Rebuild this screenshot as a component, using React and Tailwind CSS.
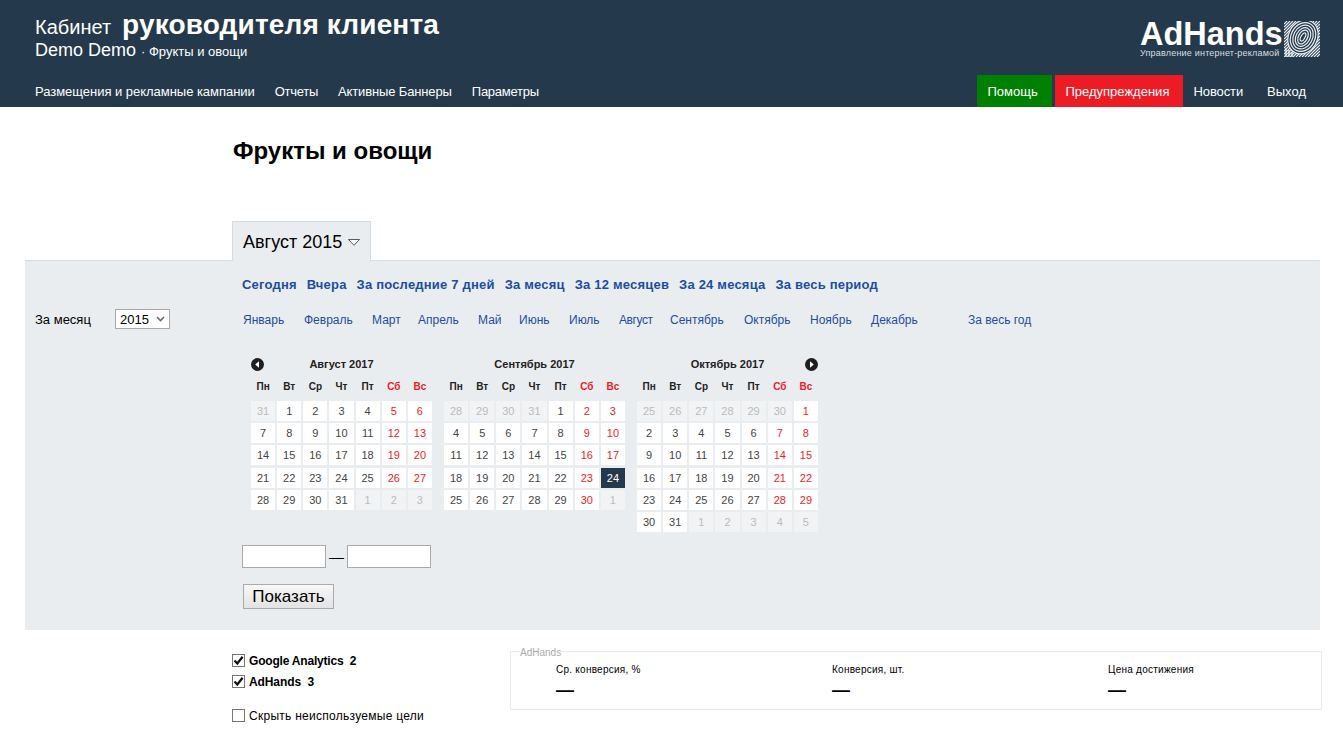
import React from "react";

const WEEK = ["Пн", "Вт", "Ср", "Чт", "Пт", "Сб", "Вс"];
const MONTH_NAMES = [
  { name: "Январь", cls: "w-[61px]" },
  { name: "Февраль", cls: "w-[68px]" },
  { name: "Март", cls: "w-[46px]" },
  { name: "Апрель", cls: "w-[60px]" },
  { name: "Май", cls: "w-[41px]" },
  { name: "Июнь", cls: "w-[50px]" },
  { name: "Июль", cls: "w-[50px]" },
  { name: "Август", cls: "w-[51px] tracking-[-0.4px]" },
  { name: "Сентябрь", cls: "w-[74px]" },
  { name: "Октябрь", cls: "w-[66px]" },
  { name: "Ноябрь", cls: "w-[61px]" },
  { name: "Декабрь", cls: "w-[97px]" },
  { name: "За весь год", cls: "" },
];
const QUICK = ["Сегодня", "Вчера", "За последние 7 дней", "За месяц", "За 12 месяцев", "За 24 месяца", "За весь период"];

const range = (from, to) => {
  const out = [];
  for (let i = from; i <= to; i++) out.push(i);
  return out;
};

const MONTHS = [
  { title: "Август 2017", before: [31], days: 31, after: [1, 2, 3], prev: true },
  { title: "Сентябрь 2017", before: [28, 29, 30, 31], days: 30, after: [1], selected: 24 },
  { title: "Октябрь 2017", before: [25, 26, 27, 28, 29, 30], days: 31, after: [1, 2, 3, 4, 5], next: true },
];

const Arrow = ({ left }) => (
  <svg width="13" height="13" viewBox="0 0 13 13">
    <circle cx="6.5" cy="6.5" r="6.5" fill="#1f1f1f" />
    {left ? <path d="M8 3.2v6.6L4.2 6.5z" fill="#fff" /> : <path d="M5 3.2v6.6l3.8-3.3z" fill="#fff" />}
  </svg>
);

const Month = ({ month }) => {
  const cells = [
    ...month.before.map((d) => ({ d, off: true })),
    ...range(1, month.days).map((d) => ({ d })),
    ...month.after.map((d) => ({ d, off: true })),
  ];
  return (
    <div className="w-[181px]">
      <div className="h-[16px] flex items-center justify-between text-[11px] font-bold text-[#222]">
        <span className="w-[13px]">{month.prev && <Arrow left />}</span>
        <span>{month.title}</span>
        <span className="w-[13px]">{month.next && <Arrow />}</span>
      </div>
      <div className="grid grid-cols-7 gap-x-[2px] mt-[8px] h-[21px] text-[10px] font-bold text-center leading-[14px]">
        {WEEK.map((w, i) => (
          <span key={w} className={i > 4 ? "text-[#ed1c24]" : "text-[#222]"}>
            {w}
          </span>
        ))}
      </div>
      <div className="grid grid-cols-7 gap-x-[2px] gap-y-[2.2px] text-[11px] text-center leading-[20px]">
        {cells.map((c, i) => {
          let cls = "bg-white text-[#444]";
          if (i % 7 > 4) cls = "bg-white text-[#ed1c24]";
          if (c.off) cls = "bg-[#f1f3f5] text-[#bbb]";
          if (!c.off && c.d === month.selected) cls = "bg-[#243a4c] text-white";
          return (
            <span key={i} className={"h-5 " + cls}>
              {c.d}
            </span>
          );
        })}
      </div>
    </div>
  );
};

const Check = ({ checked }) => (
  <span className="w-[13px] h-[13px] border border-[#767676] bg-white flex items-center justify-center shrink-0">
    {checked && (
      <svg width="11" height="11" viewBox="0 0 11 11">
        <path d="M1.5 5.5l2.8 3L9.6 1.8" fill="none" stroke="#111" strokeWidth="2.2" />
      </svg>
    )}
  </span>
);

const Fingerprint = () => (
  <svg width="36" height="36" viewBox="0 0 36 36" fill="none" stroke="#e8ecef" strokeWidth="1.2" className="shrink-0">
    <path d="M0 3L3 0M0 6L6 0M0 9L9 0M0 12L12 0M0 15L15 0M0 18L18 0M0 21L21 0M0 24L24 0M0 27L27 0M0 30L30 0M0 33L33 0M0 36L36 0M3 36L36 3M6 36L36 6M9 36L36 9M12 36L36 12M15 36L36 15M18 36L36 18M21 36L36 21M24 36L36 24M27 36L36 27M30 36L36 30M33 36L36 33" />
    <g transform="rotate(28 19 16)" fill="#243a4c">
      <ellipse cx="19" cy="16" rx="14.5" ry="17.5" />
      <ellipse cx="19" cy="16" rx="12" ry="15" />
      <ellipse cx="19" cy="16" rx="9.5" ry="12.5" />
      <ellipse cx="19" cy="16" rx="7" ry="10" />
      <ellipse cx="19" cy="16" rx="4.5" ry="7.5" />
      <ellipse cx="19" cy="16" rx="2" ry="4.5" />
    </g>
    <path d="M2 36V27M5 36V29M8 36V31" strokeWidth="1.4" />
  </svg>
);

export default function App() {
  return (
    <div className="min-h-[753px] bg-white text-black font-['Liberation_Sans',Arial,sans-serif] overflow-hidden">
      <header className="h-[107px] bg-[#243a4c] text-white flex flex-col">
        <div className="h-[75px] flex justify-between pl-[35px] pr-[23px]">
          <div className="pt-[11px]">
            <div className="flex items-baseline h-[27px] leading-[27px]">
              <span className="text-[20px]">Кабинет</span>
              <span className="text-[28px] font-bold ml-[11px] tracking-[0.15px]">руководителя клиента</span>
            </div>
            <div className="flex items-baseline mt-[2px] leading-[20px]">
              <span className="text-[18px]">Demo Demo</span>
              <span className="text-[13px] ml-[5px]">· Фрукты и овощи</span>
            </div>
          </div>
          <div className="pt-[21px] flex items-start gap-[3px]">
            <div className="flex flex-col w-[141px] whitespace-nowrap">
              <span className="text-[32.5px] leading-[26px] font-bold h-[26px]">AdHands</span>
              <span className="text-[9px] leading-[10px] mt-[1px] tracking-[0.2px] text-[#d8dde1]">Управление интернет-рекламой</span>
            </div>
            <Fingerprint />
          </div>
        </div>
        <nav className="h-[32px] flex justify-between items-stretch pl-[35px] text-[13px] leading-[34px]">
          <div className="flex gap-[20px]">
            <span className="tracking-[-0.03px]">Размещения и рекламные кампании</span>
            <span className="tracking-[-0.3px]">Отчеты</span>
            <span className="tracking-[-0.13px]">Активные Баннеры</span>
            <span className="tracking-[-0.25px]">Параметры</span>
          </div>
          <div className="flex pr-[37px]">
            <span className="w-[75px] pl-[10px] bg-[#008000]">Помощь</span>
            <span className="w-[128px] ml-[3px] pl-[10px] bg-[#ed1c24]">Предупреждения</span>
            <span className="ml-[10px] tracking-[-0.1px]">Новости</span>
            <span className="ml-[24px]">Выход</span>
          </div>
        </nav>
      </header>

      <main>
        <h1 className="pl-[233px] pt-[30px] h-[114px] text-[24px] leading-[28px] font-bold">Фрукты и овощи</h1>

        <div className="pl-[232px] h-[39px]">
          <div className="w-[139px] h-[40px] relative z-10 bg-[#eaedf0] border border-b-0 border-[#d5dbe0] flex items-center pl-[10px] pt-[2px] text-[18px]">
            Август 2015
            <svg className="ml-[6px]" width="12" height="7" viewBox="0 0 12 7">
              <path d="M.5.5h11L6 6.3z" fill="#fff" stroke="#333" strokeWidth="0.8" />
            </svg>
          </div>
        </div>

        <section className="ml-[25px] mr-[23px] h-[370px] bg-[#eaedf0] border-t border-[#d5dbe0] flex">
          <div className="w-[207px] pl-[10px] pt-[48px] flex items-center self-start text-[13px] h-[68px]">
            <span className="w-[80px] pt-[1px]">За месяц</span>
            <span className="relative w-[55px] h-[20px]">
              <select className="w-full h-full appearance-none bg-white border border-[#aaa] text-[13px] pl-[4px]" defaultValue="2015">
                <option>2015</option>
              </select>
              <svg className="absolute right-[5px] top-[7px]" width="9" height="6" viewBox="0 0 9 6">
                <path d="M1 1l3.5 3.5L8 1" fill="none" stroke="#666" strokeWidth="1.6" />
              </svg>
            </span>
          </div>
          <div className="flex-1 pl-[10px]">
            <div className="flex gap-[10px] pt-[16px] h-[48px] text-[13px] leading-[16px] font-bold tracking-[0.2px] text-[#1b4ea3]">
              {QUICK.map((q) => (
                <span key={q}>{q}</span>
              ))}
            </div>
            <div className="flex pl-[1px] h-[45px] text-[12px] leading-[22px] text-[#1b4ea3] whitespace-nowrap">
              {MONTH_NAMES.map((m) => (
                <span key={m.name} className={m.cls}>
                  {m.name}
                </span>
              ))}
            </div>
            <div className="flex items-start gap-[12px] pl-[9px] pt-[2px] h-[191px]">
              {MONTHS.map((m) => (
                <Month key={m.title} month={m} />
              ))}
            </div>
            <div className="flex items-center gap-[3px]">
              <input className="w-[84px] h-[23px] bg-white border border-[#aaa]" />
              <span className="text-[15px] leading-[23px] w-[15px] text-center">—</span>
              <input className="w-[84px] h-[23px] bg-white border border-[#aaa]" />
            </div>
            <button className="block mt-[16px] ml-[1px] w-[91px] h-[25px] border border-[#aaa] bg-gradient-to-b from-[#f7f7f7] to-[#e3e3e3] text-[17px] leading-[22px]">
              Показать
            </button>
          </div>
        </section>

        <section className="flex pl-[232px] pt-[20px] pr-[21px]">
          <div className="w-[278px] shrink-0 text-[12px]">
            <label className="flex items-center gap-[4px] h-[21px] font-bold tracking-[-0.2px]">
              <Check checked />
              <span>Google Analytics&nbsp; 2</span>
            </label>
            <label className="flex items-center gap-[4px] h-[21px] font-bold tracking-[-0.1px]">
              <Check checked />
              <span>AdHands&nbsp; 3</span>
            </label>
            <label className="flex items-center gap-[4px] h-[21px] mt-[13px] tracking-[0.27px]">
              <Check />
              <span>Скрыть неиспользуемые цели</span>
            </label>
          </div>
          <fieldset className="flex-1 min-w-0 h-[65px] border border-[#e8ebee] pl-[9px] mt-[-5px]">
            <legend className="relative top-[2px] text-[10px] leading-[12px] text-[#aaa]">AdHands</legend>
            <div className="flex pl-[36px] pt-[7px]">
              {["Ср. конверсия, %", "Конверсия, шт.", "Цена достижения"].map((t) => (
                <div key={t} className="w-[276px] shrink-0">
                  <div className="text-[10px] leading-[12px] tracking-[0.25px]">{t}</div>
                  <div className="text-[18px] leading-[20px] font-bold mt-[4px]">—</div>
                </div>
              ))}
            </div>
          </fieldset>
        </section>
      </main>
    </div>
  );
}
